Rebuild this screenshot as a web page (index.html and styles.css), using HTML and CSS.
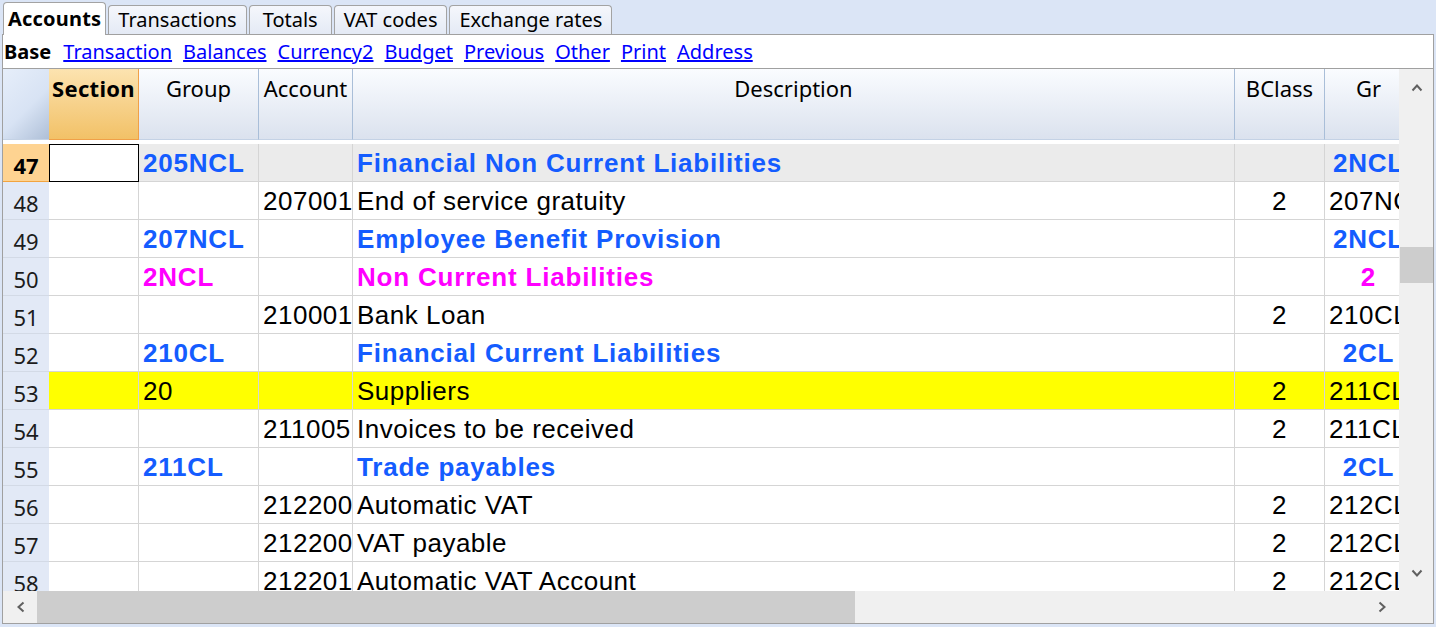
FILE: index.html
```html
<!DOCTYPE html>
<html>
<head>
<meta charset="utf-8">
<link rel="stylesheet" href="styles.css">
</head>
<body>
<div class="tabs">
  <div class="tab active">Accounts</div>
  <div class="tab">Transactions</div>
  <div class="tab">Totals</div>
  <div class="tab">VAT codes</div>
  <div class="tab">Exchange rates</div>
</div>
<div class="frame">
  <div class="subbar">
    <b class="base">Base</b>
    <a href="#">Transaction</a>
    <a href="#">Balances</a>
    <a href="#">Currency2</a>
    <a href="#">Budget</a>
    <a href="#">Previous</a>
    <a href="#">Other</a>
    <a href="#">Print</a>
    <a href="#">Address</a>
  </div>
  <div class="grid">
    <div class="sheet">
      <div class="row head">
        <div class="h corner-h"></div>
        <div class="h sec">Section</div>
        <div class="h">Group</div>
        <div class="h">Account</div>
        <div class="h">Description</div>
        <div class="h">BClass</div>
        <div class="h">Gr</div>
      </div>
      <div class="rows">
        <div class="row cur">
          <div class="c rn">47</div><div class="c sel"></div><div class="c b blue">205NCL</div><div class="c"></div><div class="c b blue">Financial Non Current Liabilities</div><div class="c"></div><div class="c b blue ctr">2NCL</div>
        </div>
        <div class="row">
          <div class="c rn">48</div><div class="c"></div><div class="c"></div><div class="c">207001</div><div class="c">End of service gratuity</div><div class="c ctr">2</div><div class="c">207NCL</div>
        </div>
        <div class="row">
          <div class="c rn">49</div><div class="c"></div><div class="c b blue">207NCL</div><div class="c"></div><div class="c b blue">Employee Benefit Provision</div><div class="c"></div><div class="c b blue ctr">2NCL</div>
        </div>
        <div class="row">
          <div class="c rn">50</div><div class="c"></div><div class="c b pink">2NCL</div><div class="c"></div><div class="c b pink">Non Current Liabilities</div><div class="c"></div><div class="c b pink ctr">2</div>
        </div>
        <div class="row">
          <div class="c rn">51</div><div class="c"></div><div class="c"></div><div class="c">210001</div><div class="c">Bank Loan</div><div class="c ctr">2</div><div class="c">210CL</div>
        </div>
        <div class="row">
          <div class="c rn">52</div><div class="c"></div><div class="c b blue">210CL</div><div class="c"></div><div class="c b blue">Financial Current Liabilities</div><div class="c"></div><div class="c b blue ctr">2CL</div>
        </div>
        <div class="row yel">
          <div class="c rn">53</div><div class="c"></div><div class="c">20</div><div class="c"></div><div class="c">Suppliers</div><div class="c ctr">2</div><div class="c">211CL</div>
        </div>
        <div class="row">
          <div class="c rn">54</div><div class="c"></div><div class="c"></div><div class="c">211005</div><div class="c">Invoices to be received</div><div class="c ctr">2</div><div class="c">211CL</div>
        </div>
        <div class="row">
          <div class="c rn">55</div><div class="c"></div><div class="c b blue">211CL</div><div class="c"></div><div class="c b blue">Trade payables</div><div class="c"></div><div class="c b blue ctr">2CL</div>
        </div>
        <div class="row">
          <div class="c rn">56</div><div class="c"></div><div class="c"></div><div class="c">212200</div><div class="c">Automatic VAT</div><div class="c ctr">2</div><div class="c">212CL</div>
        </div>
        <div class="row">
          <div class="c rn">57</div><div class="c"></div><div class="c"></div><div class="c">212200</div><div class="c">VAT payable</div><div class="c ctr">2</div><div class="c">212CL</div>
        </div>
        <div class="row">
          <div class="c rn">58</div><div class="c"></div><div class="c"></div><div class="c">212201</div><div class="c">Automatic VAT Account</div><div class="c ctr">2</div><div class="c">212CL</div>
        </div>
      </div>
    </div>
    <div class="vscroll">
      <div class="arrow"><svg width="12" height="9" viewBox="0 0 12 9"><polyline points="1.5,7.5 6,2.5 10.5,7.5" fill="none" stroke="#606060" stroke-width="2"/></svg></div>
      <div class="vthumb"></div>
      <div class="arrow down"><svg width="12" height="9" viewBox="0 0 12 9"><polyline points="1.5,1.5 6,6.5 10.5,1.5" fill="none" stroke="#606060" stroke-width="2"/></svg></div>
    </div>
    <div class="hscroll">
      <div class="harrow"><svg width="9" height="12" viewBox="0 0 9 12"><polyline points="7.5,1.5 2.5,6 7.5,10.5" fill="none" stroke="#606060" stroke-width="2"/></svg></div>
      <div class="hthumb"></div>
      <div class="harrow right"><svg width="9" height="12" viewBox="0 0 9 12"><polyline points="1.5,1.5 6.5,6 1.5,10.5" fill="none" stroke="#606060" stroke-width="2"/></svg></div>
    </div>
    <div class="corner"></div>
  </div>
</div>
</body>
</html>
```

FILE: styles.css
```css
* { box-sizing: border-box; }
html, body { margin: 0; padding: 0; }
body {
  background: #dbe5f6;
  width: 1436px;
  height: 627px;
  overflow: hidden;
  font-family: "Noto Sans", "Open Sans", sans-serif;
  color: #000;
}
.tabs {
  height: 34px;
  display: flex;
  align-items: flex-end;
  gap: 2px;
  padding-left: 3px;
}
.tab {
  height: 29px;
  min-width: 83px;
  padding: 0 9px;
  border: 1px solid #a3a3a3;
  border-bottom: none;
  border-radius: 4px 4px 0 0;
  background: linear-gradient(#f5f7fc, #e4eaf5);
  font-size: 20px;
  line-height: 27px;
  text-align: center;
  white-space: nowrap;
}
.tab.active {
  height: 33px;
  margin-bottom: -1px;
  background: #fff;
  font-weight: bold;
  padding: 2px 4px 0 4px;
  letter-spacing: 0.2px;
  line-height: 28px;
  position: relative;
  z-index: 1;
}
.frame {
  margin: 0 2px;
  border: 1px solid #a0a0a0;
  background: #fff;
}
.subbar {
  height: 34px;
  border-bottom: 1px solid #a0a0a0;
  display: flex;
  gap: 11px;
  padding-left: 1px;
  font-size: 20px;
  line-height: 33px;
  white-space: nowrap;
}
.subbar .base { font-weight: bold; margin-right: 1px; }
.subbar a { color: #0000ff; text-decoration: underline; }
.grid {
  display: grid;
  grid-template-columns: 1396px 34px;
  grid-template-rows: 522px 32px;
}
.sheet {
  overflow: hidden;
  background: #fff;
}
.row {
  display: grid;
  grid-template-columns: 46px 90px 120px 94px 882px 90px 88px;
  width: 1410px;
}
.h {
  height: 71px;
  border-right: 1px solid #a9bed8;
  border-bottom: 1px solid #c4d2e5;
  background: linear-gradient(#fafcff, #dbe2ee);
  font-size: 22px;
  line-height: 30px;
  padding-top: 4px;
  text-align: center;
  white-space: nowrap;
  overflow: hidden;
}
.h.corner-h {
  border-right: none;
  background: linear-gradient(135deg, #e6eefa 0%, #d8e3f4 55%, #aebfd7 100%);
}
.h.sec {
  background: linear-gradient(#fce3b0, #f2c167);
  border-right: 1px solid #f0a048;
  border-bottom: 1px solid #f0a048;
  font-weight: bold;
  letter-spacing: 0.3px;
}
.rows { margin-top: 4px; }
.c {
  height: 38px;
  border-right: 1px solid #d5d5d5;
  border-bottom: 1px solid #d5d5d5;
  padding: 0 3px 0 4px;
  font-family: "Liberation Sans", Arial, sans-serif;
  font-size: 26px;
  letter-spacing: 0.5px;
  line-height: 38px;
  white-space: nowrap;
  overflow: hidden;
}
.c.b { font-weight: bold; letter-spacing: 0.8px; }
.c.blue { color: #145cff; }
.c.pink { color: #ff00ff; }
.c.ctr { text-align: center; overflow: visible; padding: 0; }
.c.rn {
  background: #e2e9f6;
  border-right: none;
  border-bottom: 1px solid #d3dae6;
  font-family: "Noto Sans", "Open Sans", sans-serif;
  font-size: 22px;
  letter-spacing: 0;
  line-height: 37px;
  padding: 3px 0 0;
  text-align: center;
  color: #1c1c1c;
}
.row.cur .c { background: #ebebeb; }
.row.cur .c.rn {
  background: #fed391;
  border-bottom: 1px solid #f2a440;
  font-weight: bold;
  color: #000;
}
.row.cur .c.sel {
  background: #fff;
  border: 1px solid #000;
}
.row.yel .c { background: #ffff00; }
.row.yel .c.rn { background: #e2e9f6; }
.vscroll {
  grid-row: 1;
  grid-column: 2;
  background: #f0f0f0;
  display: flex;
  flex-direction: column;
}
.arrow {
  height: 36px;
  display: flex;
  align-items: center;
  justify-content: center;
  padding-left: 1px;
}
.arrow.down { margin-top: auto; }
.vthumb {
  margin-top: 142px;
  margin-left: 1px;
  height: 36px;
  background: #cdcdcd;
}
.hscroll {
  grid-row: 2;
  grid-column: 1;
  background: #f0f0f0;
  display: flex;
}
.harrow {
  width: 34px;
  display: flex;
  align-items: center;
  justify-content: center;
}
.harrow.right { margin-left: auto; }
.hthumb {
  width: 818px;
  background: #cdcdcd;
}
.corner {
  grid-row: 2;
  grid-column: 2;
  background: #f0f0f0;
}
```
